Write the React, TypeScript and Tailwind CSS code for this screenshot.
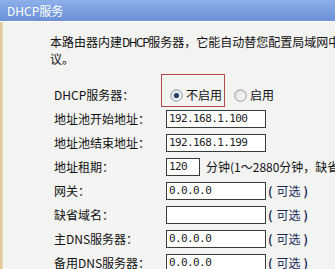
import React from "react";

const FONT = { fontFamily: '"Noto Sans CJK SC", "Noto Sans", sans-serif' };

function Radio({ checked }: { checked?: boolean }) {
  return (
    <svg width="13" height="13" viewBox="0 0 13 13" className="shrink-0">
      <defs>
        <linearGradient id={checked ? "rg1" : "rg0"} x1="0" y1="0" x2="1" y2="1">
          <stop offset="0" stopColor="#dcdcd6" />
          <stop offset="1" stopColor="#ffffff" />
        </linearGradient>
      </defs>
      <circle cx="6.5" cy="6.5" r="5.7" fill={`url(#${checked ? "rg1" : "rg0"})`} stroke="#8a98aa" strokeWidth="1" />
      {checked && <circle cx="6.5" cy="6.5" r="2.6" fill="#23406e" />}
    </svg>
  );
}

function TextBox({ value, w = "w-[100px]" }: { value?: string; w?: string }) {
  return (
    <div
      className={`${w} h-[18px] shrink-0 border border-[#3a3a3a] bg-white pl-[2px] text-[11px] leading-[16px] text-[#222]`}
      style={{ fontFamily: '"DejaVu Sans Mono", monospace', letterSpacing: "-0.6px" }}
    >
      {value}
    </div>
  );
}

function Optional() {
  return (
    <span className="ml-[2px] flex items-center whitespace-nowrap text-[12px] text-[#1e2f5c]">
      <span className="font-bold">(</span>
      <span className="ml-[4px] mr-[3px]">可选</span>
      <span className="font-bold">)</span>
    </span>
  );
}

export default function App() {
  const rows: { label: string; value?: string }[] = [
    { label: "地址池开始地址：", value: "192.168.1.100" },
    { label: "地址池结束地址：", value: "192.168.1.199" },
  ];
  const tail: { label: string; value?: string }[] = [
    { label: "网关：", value: "0.0.0.0" },
    { label: "缺省域名：", value: "" },
    { label: "主DNS服务器：", value: "0.0.0.0" },
    { label: "备用DNS服务器：", value: "0.0.0.0" },
  ];

  return (
    <div className="h-[269px] w-[335px] overflow-hidden bg-[#f3f3f2] text-[12px] text-[#111]" style={FONT}>
      {/* title bar */}
      <div className="flex h-[22px] items-center border-b border-white bg-gradient-to-b from-[#8db0ea] to-[#6a90d6] pl-[7px] text-[12px] text-white">
        DHCP服务
      </div>

      <div className="flex">
        <div className="w-[3px] shrink-0 self-stretch bg-gradient-to-r from-[#d9c18f] to-[#ecdcb8]" />
        <div className="flex-1 pl-[47px]">
          <div className="pt-[11px] leading-[17px]">
            <div className="whitespace-nowrap">
              本路由器内建<span className="tracking-[-1.5px]">DHCP</span>服务器，它能自动替您配置局域网中各计算机的TCP/IP协
            </div>
            <div>议。</div>
          </div>

          <div className="mt-[16px] pl-[4px]">
            {/* DHCP on/off */}
            <div className="flex h-[24px] items-center">
              <div className="w-[112px] shrink-0">DHCP服务器：</div>
              <div className="relative flex items-center">
                <div className="pointer-events-none absolute left-[-5px] top-[-12px] h-[33px] w-[64px] border border-[#b9474a]" />
                <label className="flex items-center gap-[3px]">
                  <span className="ml-[4px] flex"><Radio checked /></span>
                  <span>不启用</span>
                </label>
                <label className="ml-[12px] flex items-center gap-[3px]">
                  <Radio />
                  <span>启用</span>
                </label>
              </div>
            </div>

            {rows.map((r) => (
              <div key={r.label} className="flex h-[24px] items-center">
                <div className="w-[112px] shrink-0">{r.label}</div>
                <TextBox value={r.value} />
              </div>
            ))}

            {/* lease */}
            <div className="flex h-[24px] items-center">
              <div className="w-[112px] shrink-0">地址租期：</div>
              <TextBox value="120" w="w-[34px]" />
              <span className="ml-[6px] whitespace-nowrap">分钟(1～2880分钟，缺省值为120)</span>
            </div>

            {tail.map((r) => (
              <div key={r.label} className="flex h-[24px] items-center">
                <div className="w-[112px] shrink-0">{r.label}</div>
                <TextBox value={r.value} />
                <Optional />
              </div>
            ))}
          </div>
        </div>
      </div>
    </div>
  );
}
